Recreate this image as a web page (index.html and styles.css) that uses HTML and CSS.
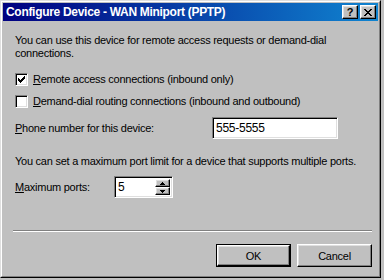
FILE: index.html
```html
<!DOCTYPE html>
<html>
<head>
<meta charset="utf-8">
<link rel="stylesheet" href="styles.css">
</head>
<body>
<div class="window">
  <div class="window-inner">
    <div class="titlebar">
      <span class="title">Configure Device - WAN Miniport (PPTP)</span>
      <span class="tbtn raised help">?</span>
      <span class="tbtn raised close">
        <svg width="8" height="7" viewBox="0 0 8 7" shape-rendering="crispEdges"><path d="M0 0h2v1h-2zM6 0h2v1h-2zM1 1h2v1h-2zM5 1h2v1h-2zM2 2h4v1h-4zM3 3h2v1h-2zM2 4h4v1h-4zM1 5h2v1h-2zM5 5h2v1h-2zM0 6h2v1h-2zM6 6h2v1h-2z" fill="#000"/></svg>
      </span>
    </div>
    <div class="client">
      <p class="intro">You can use this device for remote access requests or demand-dial connections.</p>
      <label class="check-row first">
        <span class="checkbox sunken">
          <svg width="9" height="9" viewBox="2 2 9 9" shape-rendering="crispEdges"><path d="M9 3h1v1h-1zM8 4h2v1h-2zM3 5h1v1h-1zM7 5h3v1h-3zM3 6h2v1h-2zM6 6h3v1h-3zM3 7h5v1h-5zM4 8h3v1h-3zM5 9h1v1h-1z" fill="#000"/></svg>
        </span>
        <span class="check-label"><u>R</u>emote access connections (inbound only)</span>
      </label>
      <label class="check-row second">
        <span class="checkbox sunken"></span>
        <span class="check-label"><u>D</u>emand-dial routing connections (inbound and outbound)</span>
      </label>
      <div class="field-row phone">
        <span class="field-label phone-label"><u>P</u>hone number for this device:</span>
        <span class="textbox sunken phone-box">555-5555</span>
      </div>
      <p class="note">You can set a maximum port limit for a device that supports multiple ports.</p>
      <div class="field-row ports">
        <span class="field-label ports-label"><u>M</u>aximum ports:</span>
        <span class="textbox sunken spin-box">
          <span class="spin-value">5</span>
          <span class="spin-buttons">
            <span class="spin-btn raised"><svg width="5" height="3" viewBox="0 0 5 3" shape-rendering="crispEdges"><path d="M2 0h1v1h-1zM1 1h3v1h-3zM0 2h5v1h-5z" fill="#000"/></svg></span>
            <span class="spin-btn raised"><svg width="5" height="3" viewBox="0 0 5 3" shape-rendering="crispEdges"><path d="M0 0h5v1h-5zM1 1h3v1h-3zM2 2h1v1h-1z" fill="#000"/></svg></span>
          </span>
        </span>
      </div>
      <div class="separator"></div>
      <div class="buttons">
        <span class="button default"><span class="button-face raised">OK</span></span>
        <span class="button"><span class="button-face raised">Cancel</span></span>
      </div>
    </div>
  </div>
</div>
</body>
</html>
```

FILE: styles.css
```css
* { box-sizing: border-box; }
html, body { margin: 0; padding: 0; }
body {
  width: 384px;
  height: 280px;
  overflow: hidden;
  background: #c0c0c0;
  font-family: "Liberation Sans", Arial, sans-serif;
  font-size: 11px;
  letter-spacing: -0.25px;
  color: #000;
}
.window {
  width: 381px;
  height: 278px;
  background: #c0c0c0;
  border: 1px solid;
  border-color: #dfdfdf #000 #000 #dfdfdf;
}
.window-inner {
  height: 100%;
  border: 1px solid;
  border-color: #fff #808080 #808080 #fff;
  padding: 1px;
  display: flex;
  flex-direction: column;
}
.raised {
  border: 1px solid;
  border-color: #fff #000 #000 #fff;
  box-shadow: inset -1px -1px #808080, inset 1px 1px #dfdfdf;
  background: #c0c0c0;
}
.sunken {
  border: 1px solid;
  border-color: #808080 #fff #fff #808080;
  box-shadow: inset 1px 1px #000, inset -1px -1px #dfdfdf;
  background: #fff;
}
.titlebar {
  height: 18px;
  flex: none;
  background: linear-gradient(to right, #000080, #1084d0);
  display: flex;
  align-items: center;
  padding: 0 2px 0 3px;
  color: #fff;
  font-weight: bold;
  font-size: 12px;
  letter-spacing: -0.3px;
}
.title { flex: 1; white-space: nowrap; }
.tbtn {
  width: 16px;
  height: 14px;
  display: flex;
  align-items: center;
  justify-content: center;
  color: #000;
  letter-spacing: 0;
}
.help {
  font-size: 11px;
  font-weight: bold;
  line-height: 1;
  padding-top: 1px;
}
.close { margin-left: 2px; }
.close svg { display: block; }
.client {
  flex: 1;
  display: flex;
  flex-direction: column;
  padding: 0 6px 0 12px;
}
.intro {
  margin: 13px 0 0;
  line-height: 13px;
  width: 330px;
}
.check-row {
  display: flex;
  align-items: center;
  height: 13px;
}
.check-row.first { margin-top: 13px; }
.check-row.second { margin-top: 9px; }
.checkbox {
  width: 13px;
  height: 13px;
  flex: none;
  display: flex;
  align-items: center;
  justify-content: center;
}
.checkbox svg { display: block; }
.check-label { margin-left: 5px; line-height: 13px; white-space: nowrap; }
.field-row {
  display: flex;
  align-items: center;
  height: 22px;
}
.field-row.phone { margin-top: 9px; }
.field-row.ports { margin-top: 8px; }
.field-label { flex: none; white-space: nowrap; }
.phone-label { width: 197px; }
.ports-label { width: 99px; }
.textbox {
  height: 22px;
  display: flex;
  align-items: center;
  padding-left: 3px;
}
.phone-box { width: 126px; font-size: 12px; }
.spin-box {
  width: 59px;
  font-size: 12px;
  padding-right: 2px;
  justify-content: space-between;
}
.spin-buttons {
  display: flex;
  flex-direction: column;
  height: 16px;
}
.spin-btn {
  width: 15px;
  height: 8px;
  display: flex;
  align-items: center;
  justify-content: center;
}
.spin-btn svg { display: block; }
.note {
  margin: 16px 0 0;
  line-height: 13px;
  white-space: nowrap;
}
.separator {
  margin-top: 32px;
  margin-left: -2px;
  width: 359px;
  height: 2px;
  border-top: 1px solid #808080;
  border-bottom: 1px solid #fff;
  flex: none;
}
.buttons {
  margin-top: 12px;
  display: flex;
  justify-content: flex-end;
  gap: 6px;
}
.button {
  width: 75px;
  height: 23px;
  display: flex;
}
.button-face {
  flex: 1;
  display: flex;
  align-items: center;
  justify-content: center;
}
.button.default { border: 1px solid #000; }
```
